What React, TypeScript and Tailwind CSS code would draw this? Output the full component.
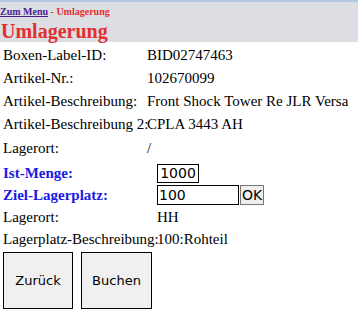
import React from "react";

const serif = { fontFamily: '"Liberation Serif", "Times New Roman", serif' };
const sans = { fontFamily: '"DejaVu Sans", Verdana, sans-serif' };

function Row({ label, value, labelW, h = "h-[23px]", labelClass = "" }: { label: string; value: React.ReactNode; labelW: string; h?: string; labelClass?: string }) {
  return (
    <div className={`flex items-center whitespace-nowrap ${h}`}>
      <div className={`${labelW} shrink-0 pl-[3px] ${labelClass}`}>{label}</div>
      <div>{value}</div>
    </div>
  );
}

export default function App() {
  return (
    <div className="w-[358px] h-[311px] bg-white text-black text-[15px] leading-none overflow-hidden" style={serif}>
      <div className="bg-[#dcdee3] border-t-[2px] border-t-[#b4c8e6] h-[42px]">
        <div className="pt-[5px] text-[10px] font-bold whitespace-nowrap">
          <a className="text-[#4b1d8f] underline">Zum Menu</a>
          <span className="text-[#e03030]"> - Umlagerung</span>
        </div>
        <h1 className="mt-[4px] pl-[1px] text-[20px] font-bold text-[#e03030]">Umlagerung</h1>
      </div>

      <div className="pt-[2px]">
        <Row labelW="w-[147px]" label="Boxen-Label-ID:" value="BID02747463" />
        <Row labelW="w-[147px]" label="Artikel-Nr.:" value="102670099" />
        <Row labelW="w-[147px]" label="Artikel-Beschreibung:" value="Front Shock Tower Re JLR Versa" />
        <Row labelW="w-[147px]" label="Artikel-Beschreibung 2:" value="CPLA 3443 AH" />
        <Row labelW="w-[147px]" h="h-[25px]" label="Lagerort:" value="/" />
      </div>

      <div className="pt-[1px]">
        <Row
          labelW="w-[157px]"
          h="h-[22px]"
          labelClass="font-bold text-[#1a1ae6]"
          label="Ist-Menge:"
          value={
            <div className="w-[42px] h-[19px] border border-black flex items-center justify-center text-[14px]" style={sans}>
              1000
            </div>
          }
        />
        <Row
          labelW="w-[157px]"
          h="h-[22px]"
          labelClass="font-bold text-[#1a1ae6]"
          label="Ziel-Lagerplatz:"
          value={
            <div className="flex items-center">
              <div className="w-[82px] h-[20px] border border-black flex items-center pl-[1px] text-[14px]" style={sans}>
                100
              </div>
              <button className="w-[24px] h-[20px] bg-[#efefef] border border-[#767676] ml-[1px] text-[14px]" style={sans}>
                OK
              </button>
            </div>
          }
        />
        <Row labelW="w-[157px]" h="h-[22px]" label="Lagerort:" value="HH" />
        <Row labelW="w-[157px]" h="h-[22px]" label="Lagerplatz-Beschreibung:" value="100:Rohteil" />
      </div>

      <div className="flex gap-[8px] pl-[3px] pt-[2px]">
        <button className="w-[70px] h-[57px] bg-[#f0f0f0] border border-black text-[13px]" style={sans}>
          Zurück
        </button>
        <button className="w-[71px] h-[57px] bg-[#f0f0f0] border border-black text-[13px]" style={sans}>
          Buchen
        </button>
      </div>
    </div>
  );
}
